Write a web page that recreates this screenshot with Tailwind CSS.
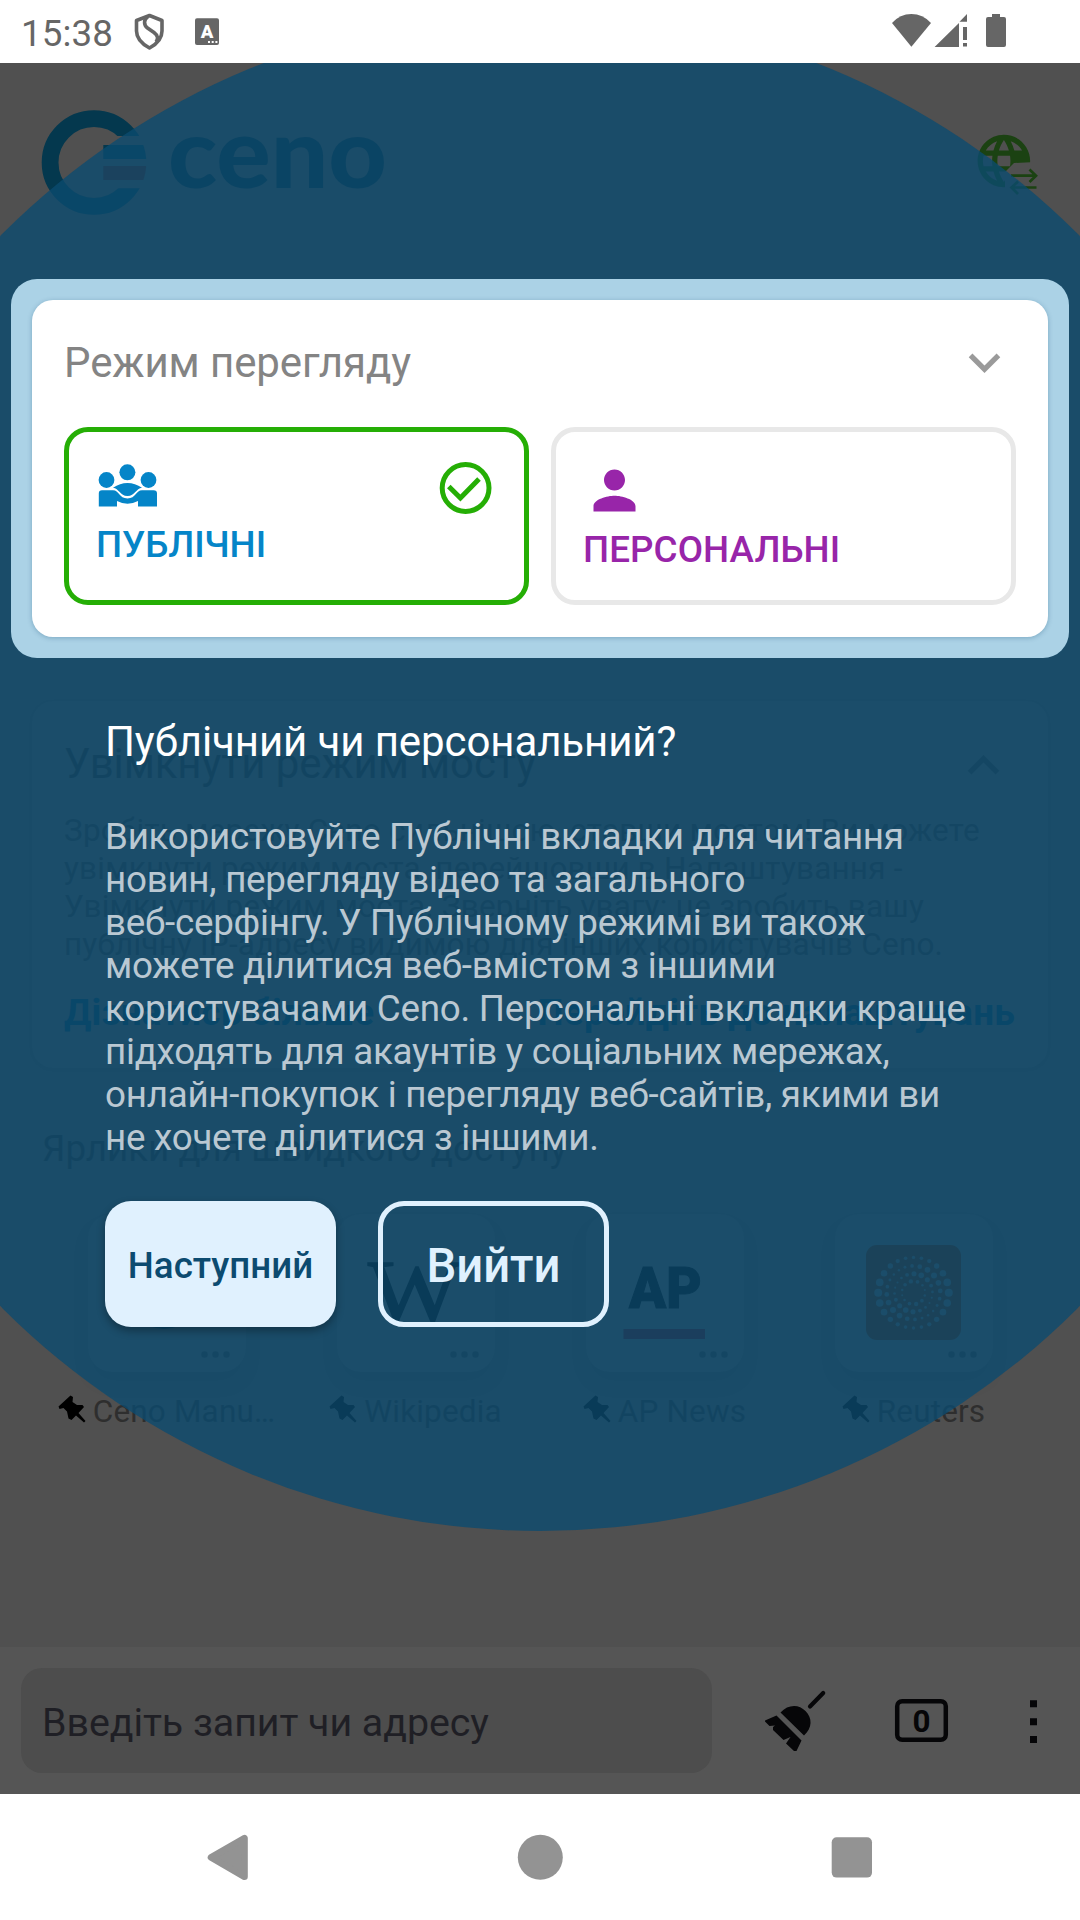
<!DOCTYPE html>
<html lang="uk">
<head>
<meta charset="utf-8">
<title>Ceno</title>
<script src="https://cdn.jsdelivr.net/npm/@tailwindcss/browser@4"></script>
</head>
<body class="bg-white">
<div class="w-[1080px] h-[1920px] overflow-hidden flex flex-col font-['Roboto',sans-serif]">

  <!-- Status bar -->
  <header class="h-[63px] shrink-0 bg-white flex items-center relative text-[#666]">
    <span class="pl-[21px] w-[132px] text-[36.75px] leading-[43px] font-[450] tracking-[0.1px] pt-[3px]">15:38</span>
    <svg class="block shrink-0" width="90" height="63" viewBox="132 0 90 63">
      <path d="M149.500 15.500L162 20.500V31C162 39 156 44.500 149.500 48C143 44.500 136.500 39 136.500 31V20.500Z" fill="none" stroke="#666" stroke-width="3.600" stroke-linejoin="round"/>
      <path d="M148 16.500C143.500 19.500 143.500 25 147.500 28L154 32.500C158 35.500 158.500 39 156 42" fill="none" stroke="#666" stroke-width="3.600"/>
      <rect x="195" y="18.300" width="24" height="26.700" rx="2" fill="#666"/>
      <text x="207" y="38" text-anchor="middle" font-family="Roboto" font-weight="900" font-size="18.500" fill="#fff">A</text>
      <path d="M208 41h2v2h-2zM211.700 41h2v2h-2zM215.400 41h2v2h-2z" fill="#fff"/>
    </svg>
    <svg class="block ml-auto mr-[70px]" width="124" height="63" viewBox="886 0 124 63" fill="#666">
      <path d="M911.400 46.700L892 23Q900 14 911.400 14T931 23Z"/>
      <path d="M934.600 47L959 23V47ZM959.500 21.700L967 14V21.700Z"/>
      <path d="M963 27h4v13h-4zM963 43h4v3.500h-4z"/>
      <path d="M992 14h8v3h4q2 0 2 2v26q0 2-2 2h-16q-2 0-2-2v-26q0-2 2-2h4z"/>
    </svg>
  </header>

  <main class="h-[1731px] shrink-0 relative overflow-hidden bg-[#505050] flex flex-col">

    <!-- Home page -->
    <div class="h-[638px] shrink-0 flex justify-between">
      <svg class="block" width="400" height="180" viewBox="0 63 400 180">
        <defs><clipPath id="ring"><path d="M30 100H160V136H94V188.300H160V225H30Z"/></clipPath>
        <clipPath id="disc"><circle cx="94" cy="162.500" r="52.300"/></clipPath></defs>
        <circle cx="94" cy="162.500" r="43.900" fill="none" stroke="#04384e" stroke-width="16.800" clip-path="url(#ring)"/>
        <rect x="103.300" y="145" width="50" height="14" fill="#04384e" clip-path="url(#disc)"/>
        <rect x="103.300" y="166" width="50" height="14" fill="#552420" clip-path="url(#disc)"/>
        <text x="168" y="188" textLength="219" lengthAdjust="spacingAndGlyphs" font-family="Lato" font-weight="900" font-size="98" fill="#062a38">ceno</text>
      </svg>
      <svg class="block" width="110" height="180" viewBox="970 63 110 180">
        <defs><mask id="cut"><rect x="970" y="63" width="110" height="180" fill="#fff"/><path d="M1014 163L1036 162V195H1005V172Z" fill="#000"/></mask></defs>
        <g mask="url(#cut)"><path transform="translate(972.400 129.500) scale(2.625)" fill="#1b4212" d="M11.990 2C6.470 2 2 6.480 2 12s4.470 10 9.990 10C17.520 22 22 17.520 22 12S17.520 2 11.990 2zm6.930 6h-2.950c-.32-1.250-.78-2.450-1.380-3.560 1.840.63 3.370 1.910 4.330 3.560zM12 4.040c.83 1.200 1.480 2.530 1.910 3.960h-3.820c.43-1.430 1.080-2.760 1.910-3.960zM4.260 14C4.100 13.360 4 12.690 4 12s.1-1.360.26-2h3.380c-.08.66-.14 1.320-.14 2s.06 1.340.14 2H4.260zm.82 2h2.950c.32 1.250.78 2.450 1.380 3.560-1.840-.63-3.370-1.900-4.330-3.560zm2.950-8H5.080c.96-1.660 2.490-2.930 4.330-3.560C8.810 5.550 8.350 6.750 8.030 8zM12 19.960c-.83-1.200-1.480-2.530-1.910-3.960h3.820c-.43 1.430-1.080 2.760-1.910 3.960zM14.340 14H9.660c-.09-.66-.16-1.320-.16-2s.07-1.350.16-2h4.680c.09.650.16 1.320.16 2s-.07 1.340-.16 2z"/></g>
        <path d="M1011 175.700H1036M1029.500 169.500L1036 175.800L1029.500 182M1036.500 187.500H1012M1018 181.500L1011.500 187.500L1018 194" fill="none" stroke="#1b4212" stroke-width="2.700"/>
      </svg>
    </div>

    <section class="mx-8 h-[367px] shrink-0 rounded-[21px] bg-[#555] pl-[32px] pr-[33px] pt-[38px] flex flex-col shadow-[0_1px_3px_rgba(0,0,0,.1)]">
      <div class="flex justify-between h-[50px]">
        <h2 class="text-[42px] leading-[50px] tracking-[-0.1px] text-[#2e2e2e] whitespace-nowrap">Увімкнути режим мосту</h2>
        <svg class="block mt-[-5px]" width="63" height="63" viewBox="0 0 24 24" fill="#353535"><path d="M12 8l-6 6 1.410 1.410L12 10.830l4.590 4.580L18 14z"/></svg>
      </div>
      <p class="mt-[23px] text-[31.500px] leading-[38px] tracking-[0.19px] text-[#353535] whitespace-nowrap">Зробіть мережу Ceno сильнішою, ставши мостом! Ви можете<br>увімкнути режим моста, перейшовши в Налаштування -<br>Увімкнути режим моста. Зверніть увагу: це зробить вашу<br>публічну IP-адресу видимою для інших користувачів Ceno.</p>
      <div class="mt-[27px] flex justify-between text-[36.750px] leading-[43px] font-bold tracking-[0.22px] text-[#003850] whitespace-nowrap">
        <a>Дізнатись більше</a><a>Перейдіть до налаштувань</a>
      </div>
    </section>

    <h3 class="mt-[59px] ml-[42px] text-[36.750px] leading-[43px] text-[#2e2e2e]">Ярлики для швидкого доступу</h3>

    <div class="mt-[44px] mx-[42px] grid grid-cols-4 text-[31.500px] leading-[38px] tracking-[0.15px] text-[#2e2e2e] whitespace-nowrap">
      <div class="flex flex-col items-center">
        <div class="w-[158px] h-[158px] rounded-[24px] bg-[#555] shadow-[0_12px_18px_-2px_rgba(0,0,0,.12)]">
          <svg class="block" width="158" height="158"><circle cx="76" cy="79" r="36" fill="#04384e"/><g fill="#353535"><circle cx="116.500" cy="140.500" r="3.200"/><circle cx="127.500" cy="140.500" r="3.200"/><circle cx="138.500" cy="140.500" r="3.200"/></g></svg>
        </div>
        <div class="mt-[21px] flex"><svg class="block mr-[7px] mt-px" width="28" height="30" viewBox="0 0 28 30"><path d="M12.500 1.500L15 3L14.500 8L19 11H24.500L26 13L20.500 19L27.500 27L26 28.500L18 21.500L13.500 26L10.500 24.500L9 17.500L5.500 14L1.500 15L.5 12.500Z" fill="#000"/></svg><span>Ceno Manu…</span></div>
      </div>
      <div class="flex flex-col items-center">
        <div class="w-[158px] h-[158px] rounded-[24px] bg-[#555] shadow-[0_12px_18px_-2px_rgba(0,0,0,.12)]">
          <svg class="block" width="158" height="158"><text x="31" y="107" textLength="93" lengthAdjust="spacingAndGlyphs" font-family="Liberation Serif" font-size="89" fill="#000" stroke="#000" stroke-width="1.500">W</text><g fill="#353535"><circle cx="116.500" cy="140.500" r="3.200"/><circle cx="127.500" cy="140.500" r="3.200"/><circle cx="138.500" cy="140.500" r="3.200"/></g></svg>
        </div>
        <div class="mt-[21px] flex"><svg class="block mr-[7px] mt-px" width="28" height="30" viewBox="0 0 28 30"><path d="M12.500 1.500L15 3L14.500 8L19 11H24.500L26 13L20.500 19L27.500 27L26 28.500L18 21.500L13.500 26L10.500 24.500L9 17.500L5.500 14L1.500 15L.5 12.500Z" fill="#000"/></svg><span>Wikipedia</span></div>
      </div>
      <div class="flex flex-col items-center">
        <div class="w-[158px] h-[158px] rounded-[24px] bg-[#555] shadow-[0_12px_18px_-2px_rgba(0,0,0,.12)]">
          <svg class="block" width="158" height="158"><text x="43" y="94" textLength="73" lengthAdjust="spacingAndGlyphs" font-family="Roboto" font-weight="900" font-size="58" fill="#000" stroke="#000" stroke-width="1">AP</text><rect x="37.500" y="115" width="81.500" height="10" fill="#551018"/><g fill="#353535"><circle cx="116.500" cy="140.500" r="3.200"/><circle cx="127.500" cy="140.500" r="3.200"/><circle cx="138.500" cy="140.500" r="3.200"/></g></svg>
        </div>
        <div class="mt-[21px] flex"><svg class="block mr-[7px] mt-px" width="28" height="30" viewBox="0 0 28 30"><path d="M12.500 1.500L15 3L14.500 8L19 11H24.500L26 13L20.500 19L27.500 27L26 28.500L18 21.500L13.500 26L10.500 24.500L9 17.500L5.500 14L1.500 15L.5 12.500Z" fill="#000"/></svg><span>AP News</span></div>
      </div>
      <div class="flex flex-col items-center">
        <div class="w-[158px] h-[158px] rounded-[24px] bg-[#555] shadow-[0_12px_18px_-2px_rgba(0,0,0,.12)]">
          <svg class="block" width="158" height="158"><rect x="31" y="31" width="95" height="95" rx="11" fill="#552405"/><g id="dots" fill="#555"></g><g fill="#353535"><circle cx="116.500" cy="140.500" r="3.200"/><circle cx="127.500" cy="140.500" r="3.200"/><circle cx="138.500" cy="140.500" r="3.200"/></g></svg>
        </div>
        <div class="mt-[21px] flex"><svg class="block mr-[7px] mt-px" width="28" height="30" viewBox="0 0 28 30"><path d="M12.500 1.500L15 3L14.500 8L19 11H24.500L26 13L20.500 19L27.500 27L26 28.500L18 21.500L13.500 26L10.500 24.500L9 17.500L5.500 14L1.500 15L.5 12.500Z" fill="#000"/></svg><span>Reuters</span></div>
      </div>
    </div>

    <!-- Toolbar -->
    <div class="mt-auto h-[147px] shrink-0 bg-[#555] flex items-center">
      <div class="ml-[21px] w-[691px] h-[105px] rounded-[21px] bg-[#4d4d4d] flex items-center pl-[21px] pt-[4px] text-[39.375px] leading-[46px] tracking-[-0.05px] text-[#1f1f25] whitespace-nowrap">Введіть запит чи адресу</div>
      <svg class="block" width="368" height="147" viewBox="712 1647 368 147" fill="#060608">
        <path d="M823.200 1693L810 1706.500" stroke="#060608" stroke-width="4.200" stroke-linecap="round"/>
        <path d="M780.500 1712.500C788 1704 799 1704 805.500 1711C812.500 1718 812.500 1728 804 1735.500Z"/>
        <path d="M776.500 1715.500L801.500 1740.500L796.500 1751H794L786 1743.500L790.500 1737L783.500 1740L773 1730V1727L775 1725.500L769.500 1726L765 1721.500V1720.500Z"/>
        <rect x="897.200" y="1701.200" width="48.600" height="38.600" rx="5" fill="none" stroke="#060608" stroke-width="4.500"/>
        <text x="912.500" y="1731.800" textLength="18" lengthAdjust="spacingAndGlyphs" font-family="Roboto" font-weight="700" font-size="32">0</text>
        <path d="M1030 1700.300h7v7h-7zM1030 1718.200h7v7h-7zM1030 1736h7v7h-7z"/>
      </svg>
    </div>

    <!-- Onboarding overlay -->
    <div class="absolute inset-0">
      <div class="absolute left-[-220px] top-[-52px] w-[1520px] h-[1520px] rounded-full bg-[#0c4b70]/79"></div>
      <div class="relative flex flex-col pt-[216px]">
        <div class="mx-[11px] h-[379px] rounded-[26px] bg-[#abd2e6] p-[21px]">
          <section class="h-[337px] rounded-[21px] bg-white px-8 pt-[31px] shadow-[0_1px_5px_rgba(0,60,100,.28)]">
            <div class="h-[64px] flex items-center justify-between">
              <h2 class="text-[42px] leading-[50px] tracking-[-0.08px] text-[#848484]">Режим перегляду</h2>
              <svg class="block mb-[2px]" width="63" height="63" viewBox="0 0 24 24" fill="#9a9a9a"><path d="M7.410 8.590L12 13.170l4.590-4.580L18 10l-6 6-6-6z"/></svg>
            </div>
            <div class="mt-8 flex gap-[22px] text-[36.750px] leading-[43px] font-medium">
              <div class="w-[465px] h-[178px] rounded-[24px] border-[5px] border-[#25ae05] pl-[25px] pt-[28px] pr-[30px] flex justify-between text-[#0585c8]">
                <div>
                  <svg class="block" width="66" height="50" viewBox="94 460 66 50" fill="#0585c8">
                    <circle cx="106.500" cy="480" r="7.900"/><circle cx="127.400" cy="472.300" r="8"/><circle cx="148.500" cy="480" r="7.900"/>
                    <path d="M98.800 506.500V493.500Q98.800 490.300 102 490.300H113C119 490.300 119 498.500 127.500 498.500C136 498.500 136 490.300 142 490.300H153.500Q157 490.300 157 493.500V506.500H138V501Q127.500 506.500 117 501V506.500Z"/>
                    <path d="M113 487.800Q120 483 127.500 483T142 487.800C136 488.500 135 496 127.500 496S119 488.500 113 487.800Z"/>
                  </svg>
                  <span class="block mt-[13px] ml-[2px]">ПУБЛІЧНІ</span>
                </div>
                <svg class="block" width="56" height="56" viewBox="438 460 56 56" fill="none" stroke="#25ae05" stroke-width="5"><circle cx="465.600" cy="488" r="23.400"/><path d="M448.800 486.500L460.400 498L479 479"/></svg>
              </div>
              <div class="w-[465px] h-[178px] rounded-[24px] border-[5px] border-[#e8e8e8] pl-[25px] pt-[27px] text-[#9825a9]">
                <svg class="block ml-[2px]" width="63" height="63" viewBox="0 0 24 24" fill="#9825a9"><path d="M12 12c2.210 0 4-1.790 4-4s-1.790-4-4-4-4 1.790-4 4 1.790 4 4 4zm0 2c-2.670 0-8 1.340-8 4v2h16v-2c0-2.660-5.330-4-8-4z"/></svg>
                <span class="block mt-[6px] ml-[2px] tracking-[0.1px]">ПЕРСОНАЛЬНІ</span>
              </div>
            </div>
          </section>
        </div>
        <div class="ml-[105px] mt-[59px]">
          <h1 class="text-[42px] leading-[50px] tracking-[-0.1px] text-white">Публічний чи персональний?</h1>
          <p class="mt-[48px] text-[36.750px] leading-[43px] tracking-[-0.25px] text-[#bac8d2] whitespace-nowrap">Використовуйте Публічні вкладки для читання<br>новин, перегляду відео та загального<br>веб-серфінгу. У Публічному режимі ви також<br>можете ділитися веб-вмістом з іншими<br>користувачами Ceno. Персональні вкладки краще<br>підходять для акаунтів у соціальних мережах,<br>онлайн-покупок і перегляду веб-сайтів, якими ви<br>не хочете ділитися з іншими.</p>
          <div class="mt-[42px] flex gap-[42px] font-medium">
            <button class="w-[231px] h-[126px] rounded-[26px] bg-[#e0f1fe] text-[#0c4b70] text-[36.750px] leading-[43px] pt-[3px] shadow-[0_4px_8px_rgba(0,0,0,.32)]">Наступний</button>
            <button class="w-[231px] h-[126px] rounded-[26px] border-[5px] border-[#e0f1fe] text-[#e0f1fe] text-[47.250px] leading-[56px] tracking-[-0.1px] pt-[3px]">Вийти</button>
          </div>
        </div>
      </div>
    </div>
  </main>

  <!-- System navigation -->
  <nav class="flex-1 bg-white flex">
    <svg class="block" width="1080" height="126" viewBox="0 1794 1080 126" fill="#939393">
      <path d="M211 1857.300L244.500 1838.200V1876.800Z" stroke="#939393" stroke-width="6.600" stroke-linejoin="round"/>
      <circle cx="540.300" cy="1857.300" r="22.500"/>
      <rect x="831.700" y="1837.300" width="40.300" height="40.300" rx="5"/>
    </svg>
  </nav>
</div>
<script>
  // Concentric dot rings: [radius, count, angle of the largest dots, largest, smallest]
  const rings = [[35.3, 24, 0, 4, 1.7], [26.8, 22, 0.7, 3, 1.2], [19, 18, 1.15, 2.8, 1], [11.600, 12, 1.8, 2.2, 1]];
  const g = document.getElementById('dots');
  for (const [R, n, phi, big, small] of rings) {
    for (let i = 0; i < n; i++) {
      const u = i * 2 * Math.PI / n, t = u + 0.07 * Math.sin(2 * u) + phi, c = document.createElementNS('http://www.w3.org/2000/svg', 'circle');
      c.setAttribute('cx', 78.5 + R * Math.cos(t));
      c.setAttribute('cy', 78.7 - R * Math.sin(t));
      c.setAttribute('r', small + (big - small) * Math.cos(t - phi) ** 2);
      g.appendChild(c);
    }
  }
</script>
</body>
</html>
